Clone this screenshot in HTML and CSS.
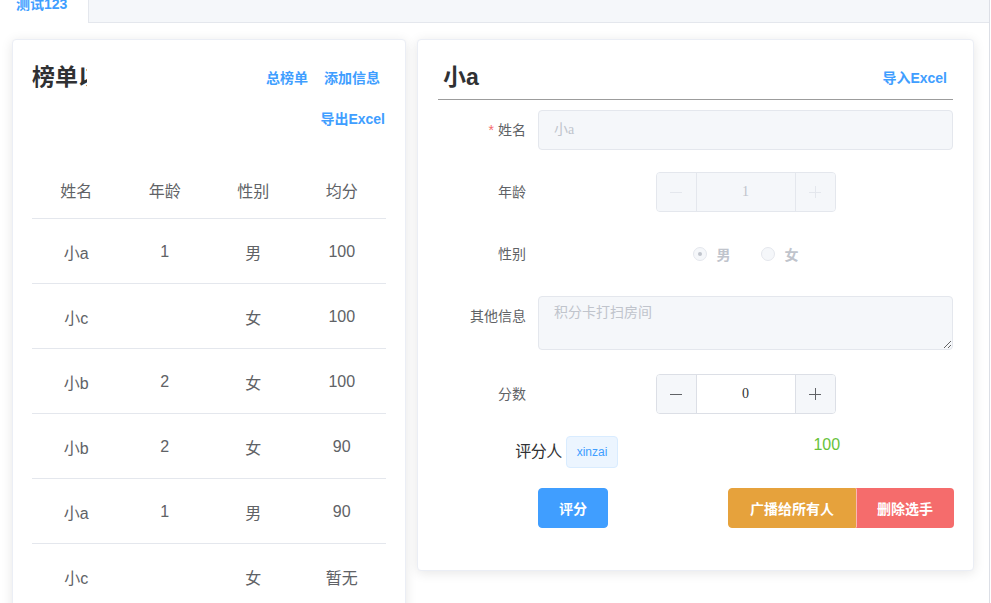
FILE: index.html
```html
<!DOCTYPE html>
<html lang="zh-CN">
<head>
<meta charset="utf-8">
<title>测试123</title>
<link rel="stylesheet" href="styles.css">
</head>
<body>
<div class="page">
  <div class="tabs">
    <div class="tab active"><span>测试123</span></div>
    <div class="tab-rest"></div>
  </div>
  <div class="content">
    <section class="card left">
      <div class="lhead">
        <h2 class="ltitle">榜单以及排名</h2>
        <div class="links">
          <div class="link-row first"><a class="link">总榜单</a><a class="link">添加信息</a></div>
          <div class="link-row second"><a class="link">导出Excel</a></div>
        </div>
      </div>
      <div class="table">
        <div class="tr th"><div>姓名</div><div>年龄</div><div>性别</div><div>均分</div></div>
        <div class="tr"><div>小a</div><div>1</div><div>男</div><div>100</div></div>
        <div class="tr"><div>小c</div><div></div><div>女</div><div>100</div></div>
        <div class="tr"><div>小b</div><div>2</div><div>女</div><div>100</div></div>
        <div class="tr"><div>小b</div><div>2</div><div>女</div><div>90</div></div>
        <div class="tr"><div>小a</div><div>1</div><div>男</div><div>90</div></div>
        <div class="tr"><div>小c</div><div></div><div>女</div><div>暂无</div></div>
      </div>
    </section>

    <section class="card right">
      <div class="rhead">
        <h2 class="rtitle">小a</h2>
        <a class="link">导入Excel</a>
      </div>
      <div class="form">
        <div class="item">
          <label class="lbl"><span class="req">*</span>姓名</label>
          <div class="ctrl"><div class="inp disabled">小a</div></div>
        </div>
        <div class="item">
          <label class="lbl">年龄</label>
          <div class="ctrl center">
            <div class="num disabled">
              <span class="nbtn dec"><svg width="12" height="12" viewBox="0 0 12 12"><path d="M0 6.5H12" stroke="currentColor" stroke-width="1"/></svg></span>
              <span class="nval">1</span>
              <span class="nbtn inc"><svg width="12" height="12" viewBox="0 0 12 12"><path d="M0 6.5H12M6.5 0V12" stroke="currentColor" stroke-width="1"/></svg></span>
            </div>
          </div>
        </div>
        <div class="item">
          <label class="lbl">性别</label>
          <div class="ctrl center">
            <div class="radios">
              <span class="radio checked"><span class="rc"></span><span class="rt">男</span></span>
              <span class="radio"><span class="rc"></span><span class="rt">女</span></span>
            </div>
          </div>
        </div>
        <div class="item tall">
          <label class="lbl">其他信息</label>
          <div class="ctrl"><textarea class="ta" readonly>积分卡打扫房间</textarea></div>
        </div>
        <div class="item">
          <label class="lbl">分数</label>
          <div class="ctrl center">
            <div class="num">
              <span class="nbtn dec"><svg width="12" height="12" viewBox="0 0 12 12"><path d="M0 6.5H12" stroke="currentColor" stroke-width="1"/></svg></span>
              <span class="nval">0</span>
              <span class="nbtn inc"><svg width="12" height="12" viewBox="0 0 12 12"><path d="M0 6.5H12M6.5 0V12" stroke="currentColor" stroke-width="1"/></svg></span>
            </div>
          </div>
        </div>
        <div class="judge-row">
          <div class="jcol"><span class="jlabel">评分人</span><span class="tag">xinzai</span></div>
          <div class="jcol"><span class="score">100</span></div>
        </div>
        <div class="item actions">
          <div class="ctrl between">
            <button class="btn primary">评分</button>
            <div class="btn-group">
              <button class="btn warning">广播给所有人</button>
              <button class="btn danger">删除选手</button>
            </div>
          </div>
        </div>
      </div>
    </section>
  </div>
</div>
</body>
</html>
```
FILE: styles.css
```css
* { box-sizing: border-box; }
html, body { margin: 0; padding: 0; background: #fff; }
body {
  font-family: "Liberation Sans", "Noto Sans CJK SC", sans-serif;
  color: #606266;
  font-size: 14px;
}
.page {
  width: 990px;
  height: 603px;
  overflow: hidden;
  border-right: 1px solid #dcdfe6;
}
.tabs {
  display: flex;
  height: 23px;
}
.tab {
  width: 88px;
  height: 23px;
  background: #fff;
  overflow: hidden;
}
.tab span {
  display: block;
  margin-top: -6px;
  padding-left: 16px;
  line-height: 20px;
  font-size: 14px;
  font-weight: 600;
  color: #409eff;
}
.tab-rest {
  flex: 1;
  background: #f5f7fa;
  border-left: 1px solid #e4e7ed;
  border-bottom: 1px solid #e4e7ed;
}
.content {
  display: flex;
  align-items: flex-start;
  gap: 11px;
  padding: 16px 0 0 12px;
}
.card {
  background: #fff;
  border: 1px solid #ebeef5;
  border-radius: 4px;
  box-shadow: 0 2px 12px 0 rgba(0, 0, 0, 0.1);
}
.card.left {
  width: 394px;
  padding: 19px 19px 0;
  height: 620px;
}
.card.right {
  width: 557px;
  padding: 20px 20px 20px;
}
.lhead {
  display: flex;
  justify-content: space-between;
  align-items: flex-start;
  height: 101px;
}
.ltitle {
  margin: 0;
  width: 55px;
  overflow: hidden;
  white-space: nowrap;
  font-size: 23px;
  line-height: 36px;
  font-weight: 700;
  color: #303133;
}
.links {
  display: flex;
  flex-direction: column;
  align-items: flex-end;
}
.link-row { display: flex; gap: 16px; }
.link-row.first { line-height: 38px; padding-right: 6px; }
.link-row.second { line-height: 44px; padding-right: 1px; }
.link {
  font-size: 14px;
  font-weight: 600;
  color: #409eff;
  cursor: pointer;
}
.table .tr {
  display: grid;
  grid-template-columns: repeat(4, 1fr);
  align-items: center;
  text-align: center;
  height: 65px;
  border-bottom: 1px solid #e4e7ed;
  font-size: 16px;
  color: #606266;
}
.table .tr.th { height: 59px; padding-top: 1px; }
.table .tr:not(.th) { padding-top: 1px; }

.rhead {
  display: flex;
  justify-content: space-between;
  align-items: flex-start;
  height: 40px;
  border-bottom: 1px solid #9c9c9c;
}
.rtitle {
  margin: 0;
  padding-left: 5px;
  font-size: 23px;
  line-height: 34px;
  font-weight: 700;
  color: #303133;
}
.rhead .link { padding-right: 6px; line-height: 36px; }
.form { padding-top: 10px; }
.item {
  display: flex;
  margin-bottom: 22px;
}
.item.tall { margin-bottom: 24px; }
.lbl {
  width: 100px;
  flex: none;
  text-align: right;
  padding-right: 12px;
  line-height: 40px;
  font-size: 14px;
  color: #606266;
}
.req { color: #f56c6c; margin-right: 4px; }
.ctrl { flex: 1; display: flex; min-height: 40px; }
.ctrl.center { justify-content: center; align-items: center; }
.ctrl.between { justify-content: space-between; margin-left: 100px; }
.inp {
  width: 100%;
  height: 40px;
  line-height: 38px;
  padding: 0 15px;
  border: 1px solid #dcdfe6;
  border-radius: 4px;
  font-family: "Liberation Serif", "Noto Sans CJK SC", serif;
  font-size: 14px;
}
.inp.disabled { background: #f5f7fa; border-color: #e4e7ed; color: #c0c4cc; }
.num {
  display: flex;
  width: 180px;
  height: 40px;
  border: 1px solid #dcdfe6;
  border-radius: 4px;
  overflow: hidden;
  background: #fff;
}
.nbtn {
  width: 40px;
  flex: none;
  display: flex;
  align-items: center;
  justify-content: center;
  background: #f5f7fa;
  color: #606266;
}
.nbtn.dec { border-right: 1px solid #dcdfe6; }
.nbtn.inc { border-left: 1px solid #dcdfe6; }
.nval {
  flex: 1;
  text-align: center;
  line-height: 38px;
  font-family: "Liberation Serif", serif;
  font-size: 14px;
  color: #303133;
}
.num.disabled { background: #f5f7fa; border-color: #e4e7ed; }
.num.disabled .nbtn { color: #e4e7ed; border-color: #e4e7ed; }
.num.disabled .nval { color: #c0c4cc; }
.radios { display: flex; align-items: center; }
.radio { display: flex; align-items: center; margin-right: 30px; }
.radio:last-child { margin-right: 0; }
.rc {
  width: 14px;
  height: 14px;
  border-radius: 50%;
  border: 1px solid #e4e7ed;
  background: #f5f7fa;
  display: flex;
  align-items: center;
  justify-content: center;
}
.radio.checked .rc::after {
  content: "";
  width: 4px;
  height: 4px;
  border-radius: 50%;
  background: #c0c4cc;
}
.rt { margin-left: 10px; font-size: 14px; color: #c0c4cc; font-weight: 600; }
.ta {
  display: block;
  width: 100%;
  height: 54px;
  padding: 5px 15px;
  border: 1px solid #e4e7ed;
  border-radius: 4px;
  background: #f5f7fa;
  color: #c0c4cc;
  font-family: "Liberation Sans", "Noto Sans CJK SC", sans-serif;
  font-size: 14px;
  line-height: 1.5;
  outline: none;
  resize: vertical;
}
.judge-row {
  display: grid;
  grid-template-columns: 1fr 1fr;
  margin-bottom: 20px;
}
.jcol { display: flex; justify-content: center; align-items: flex-start; }
.jlabel { font-size: 16px; color: #303133; line-height: 32px; margin-right: 4px; letter-spacing: -0.5px; }
.tag {
  height: 32px;
  line-height: 30px;
  padding: 0 10px;
  font-size: 12px;
  color: #409eff;
  background: #ecf5ff;
  border: 1px solid #d9ecff;
  border-radius: 4px;
}
.score { font-size: 16px; line-height: 18px; color: #67c23a; margin-left: 5px; }
.item.actions { margin-bottom: 22px; }
.btn {
  height: 40px;
  padding: 0 20px;
  border: 1px solid transparent;
  border-radius: 4px;
  font-family: "Liberation Sans", "Noto Sans CJK SC", sans-serif;
  font-size: 14px;
  font-weight: 700;
  color: #fff;
  cursor: pointer;
}
.btn.primary { background: #409eff; border-color: #409eff; width: 70px; }
.btn-group { display: flex; margin-right: -1px; }
.btn.warning { background: #e6a23c; border-color: #e6a23c; border-radius: 4px 0 0 4px; width: 128px; }
.btn.danger { background: #f56c6c; border-color: #f56c6c; border-left-color: rgba(255,255,255,0.5); border-radius: 0 4px 4px 0; width: 98px; }
```
